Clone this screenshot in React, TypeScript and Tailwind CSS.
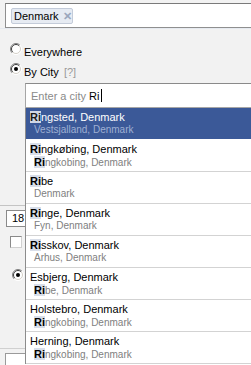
import React from "react";

function Radio({ checked }: { checked?: boolean }) {
  return (
    <svg width="12" height="12" viewBox="0 0 12 12" className="shrink-0">
      <circle cx="6" cy="6" r="5.5" fill="#ffffff" />
      <path d="M 2.1 9.9 A 5.5 5.5 0 0 1 9.9 2.1" fill="none" stroke="#808080" strokeWidth="1" />
      <path d="M 2.8 9.2 A 4.5 4.5 0 0 1 9.2 2.8" fill="none" stroke="#404040" strokeWidth="1" />
      <path d="M 9.9 2.1 A 5.5 5.5 0 0 1 2.1 9.9" fill="none" stroke="#ffffff" strokeWidth="1" />
      <path d="M 9.2 2.8 A 4.5 4.5 0 0 1 2.8 9.2" fill="none" stroke="#d4d0c8" strokeWidth="1" />
      {checked && <circle cx="6" cy="6" r="2" fill="#000000" />}
    </svg>
  );
}

type Item = {
  hl?: string;
  rest: string;
  sub: string;
  subHl?: string;
};

const items: Item[] = [
  { hl: "Ri", rest: "ngsted, Denmark", sub: "Vestsjalland, Denmark" },
  { hl: "Ri", rest: "ngkøbing, Denmark", subHl: "Ri", sub: "ngkobing, Denmark" },
  { hl: "Ri", rest: "be", sub: "Denmark" },
  { hl: "Ri", rest: "nge, Denmark", sub: "Fyn, Denmark" },
  { hl: "Ri", rest: "sskov, Denmark", sub: "Arhus, Denmark" },
  { rest: "Esbjerg, Denmark", subHl: "Ri", sub: "be, Denmark" },
  { rest: "Holstebro, Denmark", subHl: "Ri", sub: "ngkobing, Denmark" },
  { rest: "Herning, Denmark", subHl: "Ri", sub: "ngkobing, Denmark" },
];

export default function App() {
  return (
    <div className="relative w-[251px] h-[365px] overflow-hidden bg-[#f2f2f2] font-['Liberation_Sans',Arial,sans-serif] text-[11px] text-black">
      {/* top token box */}
      <div className="mt-[3px] ml-[5px] w-[260px] h-[25px] border border-[#8f8f8f] border-t-[#7a7a7a] bg-white flex items-start">
        <div className="mt-[4px] ml-[5px] h-[16px] w-[62px] rounded-[2px] border border-[#c3cbd9] bg-[#e6ebf3] flex items-center pl-[2px] leading-[14px]">
          <span>Denmark</span>
          <span className="ml-[4px] text-[#9aa7bd] text-[11px] font-bold leading-[14px]">✕</span>
        </div>
      </div>
      <div className="h-px w-full bg-[#e6eaf0]" />

      {/* radios */}
      <div className="mt-[12px] h-[20px] flex items-start pl-[10px]">
        <div className="mt-[2px]"><Radio /></div>
        <span className="ml-[2px] mt-[5px] leading-[13px]">Everywhere</span>
      </div>
      <div className="h-[20px] flex items-start pl-[10px]">
        <div className="mt-[2px]"><Radio checked /></div>
        <span className="ml-[2px] mt-[5px] leading-[13px]">
          By City <span className="text-[#9a9a9a] ml-[2px]">[?]</span>
        </span>
      </div>

      {/* city input */}
      <div className="mt-[2px] ml-[25px] w-[240px] h-[25px] border border-[#a6a6a6] border-t-[#8a8a8a] bg-white flex items-center pl-[5px] leading-[14px]">
        <span className="text-[#8a8a8a]">Enter a city</span>
        <span className="ml-[3px]">Ri</span>
        <span className="ml-[2px] w-px h-[13px] bg-black" />
      </div>

      {/* background form elements (under dropdown) */}
      <div className="mt-[97px] h-px w-full bg-[#c4c4c4]" />
      <div className="mt-[4px] ml-[6px] w-[40px] h-[17px] border border-[#8a8a8a] bg-white pl-[5px] leading-[15px]">18</div>
      <div className="mt-[9px] ml-[10px] w-[12px] h-[12px] border border-[#8a8a8a] border-b-[#d0d0d0] border-r-[#d0d0d0] bg-white" />
      <div className="mt-[21px] ml-[12px]"><Radio checked /></div>
      <div className="mt-[67px] h-px w-full bg-[#d0d0d0]" />
      <div className="mt-[4px] ml-[5px] w-[250px] h-[20px] border border-[#9a9a9a] bg-white" />

      {/* dropdown */}
      <div className="absolute left-[25px] top-[108px] w-[240px] bg-white border-l border-[#8c8c8c]">
        {items.map((it, i) => {
          const sel = i === 0;
          return (
            <div
              key={i}
              className={
                sel
                  ? "h-[32px] pt-[3px] pl-[4px] bg-[#3b5998] border-b border-[#ffffff]"
                  : "h-[32px] pt-[3px] pl-[4px] bg-white border-b border-[#d3d3d3]"
              }
            >
              <div className={sel ? "leading-[13px] text-white whitespace-nowrap" : "leading-[13px] text-black whitespace-nowrap"}>
                {it.hl && (
                  <span className={sel ? "font-bold text-[#1a1a1a] bg-[#d0d7e5]" : "font-bold bg-[#d8dee9]"}>{it.hl}</span>
                )}
                {it.rest}
              </div>
              <div
                className={
                  sel
                    ? "pl-[4px] text-[10px] leading-[12px] text-[#9fb0d3] whitespace-nowrap"
                    : "pl-[4px] text-[10px] leading-[12px] text-[#808080] whitespace-nowrap"
                }
              >
                {it.subHl && <span className="font-bold text-black bg-[#d8dee9] text-[11px]">{it.subHl}</span>}
                {it.sub}
              </div>
            </div>
          );
        })}
      </div>
    </div>
  );
}
